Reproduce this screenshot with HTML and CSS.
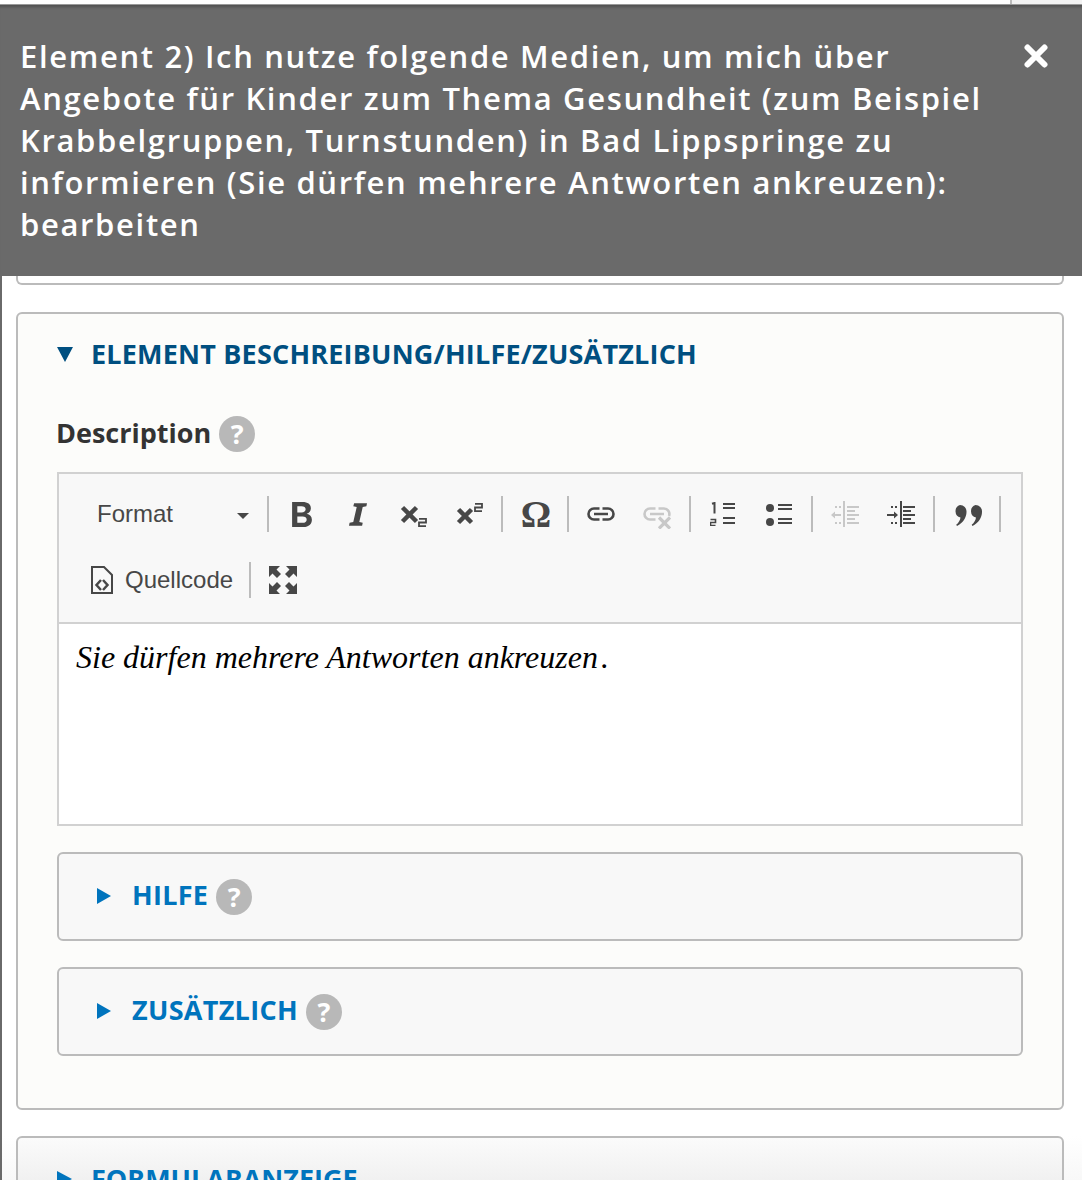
FILE: index.html
```html
<!DOCTYPE html>
<html lang="de">
<head>
    <meta charset="UTF-8">
    <meta name="viewport" content="width=device-width, initial-scale=1.0">
    <title>Element bearbeiten</title>
    <link rel="stylesheet" href="styles.css">
</head>
<body>

    <div class="top-strip"><span class="top-strip-end"></span></div>

    <!-- Dialog Titel -->
    <header class="dialog-title">
        <h1>Element 2) Ich nutze folgende Medien, um mich über Angebote für Kinder zum Thema Gesundheit (zum Beispiel Krabbelgruppen, Turnstunden) in Bad Lippspringe zu informieren (Sie dürfen mehrere Antworten ankreuzen): bearbeiten</h1>
        <svg class="dialog-close" viewBox="0 0 24 24"><path d="M3.500 3.500 L20.500 20.500 M20.500 3.500 L3.500 20.500" stroke="#fff" stroke-width="6" stroke-linecap="round" fill="none"/></svg>
    </header>

    <main class="dialog-body">
        <div class="panel panel-cut"></div>

        <section class="panel panel-open">
            <h2 class="panel-head">
                <span class="arrow-down"></span>
                ELEMENT BESCHREIBUNG/HILFE/ZUSÄTZLICH
            </h2>

            <div class="field-label">Description <span class="help">?</span></div>

            <div class="editor">
                <div class="toolbar">
                    <div class="tb-row">
                        <div class="tb-combo">Format<span class="combo-arrow"></span></div>
                        <span class="tb-sep"></span>
                        <span class="tb-btn tb-shift">
                            <svg viewBox="3 2 19 24" width="20" height="25"><path fill-rule="evenodd" fill="#474747" d="M3 2h10c5 0 8 2 8 6 0 3-1.500 4.500-4 5.300 3 .6 5 2.700 5 5.700 0 4-3 7-8 7H3zM8 6v6h4c2.500 0 4-1 4-3s-1.500-3-4-3zM8 16v6h5c2.500 0 4-1 4-3s-1.500-3-4-3z"/></svg>
                        </span>
                        <span class="tb-btn tb-shift">
                            <svg viewBox="2 1 21 26" width="18" height="25"><path fill="#474747" d="M8 1h15l-.7 3.500-4.300.8-4 17.400 4 .8-.7 3.500H2l.7-3.500 4.300-.8 4-17.400-4-.8z"/></svg>
                        </span>
                        <span class="tb-btn">
                            <svg viewBox="0 0 28 26" width="28" height="26"><path stroke="#474747" stroke-width="4.500" d="M3.500 6.500 L17.500 20.500 M17.500 6.500 L3.500 20.500"/><path stroke="#474747" stroke-width="1.800" fill="none" d="M20 17.900h7v3.600h-7v3.600h7"/></svg>
                        </span>
                        <span class="tb-btn">
                            <svg viewBox="0 0 28 26" width="28" height="26"><path stroke="#474747" stroke-width="4.500" d="M3.500 8.500 L16.500 21.500 M16.500 8.500 L3.500 21.500"/><path stroke="#474747" stroke-width="1.800" fill="none" d="M20 2.900h7v3.600h-7v3.600h7"/></svg>
                        </span>
                        <span class="tb-sep"></span>
                        <span class="tb-btn tb-omega tb-shift">Ω</span>
                        <span class="tb-sep"></span>
                        <span class="tb-btn">
                            <svg viewBox="0 0 28 14" width="28" height="14"><path fill="none" stroke="#474747" stroke-width="2.600" d="M12.500 1.500H7A5.500 5.500 0 0 0 7 12.500H12.500M15.500 1.500H21A5.500 5.500 0 0 1 21 12.500H15.500M7 7H21"/></svg>
                        </span>
                        <span class="tb-btn">
                            <svg viewBox="0 0 28 22" width="28" height="22" class="tb-unlink"><path fill="none" stroke="#c8c8c8" stroke-width="2.600" d="M12.500 1.500H7A5.500 5.500 0 0 0 7 12.500H12.500M15.500 1.500H21A5.500 5.500 0 0 1 26 9M7 7H21"/><path stroke="#c8c8c8" stroke-width="3.200" d="M16 10.500 L27 21.500 M27 10.500 L16 21.500"/></svg>
                        </span>
                        <span class="tb-sep"></span>
                        <span class="tb-btn">
                            <svg viewBox="0 0 26 24" width="26" height="24"><path stroke="#474747" stroke-width="2" fill="none" d="M2 1.800 L4.500 1 V11.500"/><path stroke="#474747" stroke-width="1.600" fill="none" d="M.5 17.500h5v3h-5v3h5"/><path stroke="#474747" stroke-width="2" d="M13 2h12M13 6h12M13 16h12M13 21h12"/></svg>
                        </span>
                        <span class="tb-btn">
                            <svg viewBox="0 0 26 24" width="26" height="24"><circle cx="4" cy="6" r="4" fill="#474747"/><circle cx="4" cy="20" r="4" fill="#474747"/><path stroke="#474747" stroke-width="2" d="M12 3h14M12 7h14M12 17h14M12 21h14"/></svg>
                        </span>
                        <span class="tb-sep"></span>
                        <span class="tb-btn">
                            <svg viewBox="0 0 28 26" width="28" height="26"><g fill="#c8c8c8"><path d="M12 0h2v26h-2z"/><path d="M4 5h2v2H4zM8 5h2v2H8zM4 21h2v2H4zM8 21h2v2H8z"/><path d="M4 13h6v2H4zM0 14l4-3.500v7z"/><path d="M16 5h12v2H16zM16 9h8v2h-8zM16 13h12v2H16zM16 17h8v2h-8zM16 21h12v2H16z"/></g></svg>
                        </span>
                        <span class="tb-btn">
                            <svg viewBox="0 0 28 26" width="28" height="26"><g fill="#474747"><path d="M13 0h2v26h-2z"/><path d="M4 5h2v2H4zM8 5h2v2H8zM4 21h2v2H4zM8 21h2v2H8z"/><path d="M0 13h7v2H0zM11 14l-4-3.500v7z"/><path d="M16 5h12v2H16zM16 9h8v2h-8zM16 13h12v2H16zM16 17h8v2h-8zM16 21h12v2H16z"/></g></svg>
                        </span>
                        <span class="tb-sep"></span>
                        <span class="tb-btn">
                            <svg viewBox="0 0 29 21" width="29" height="21" class="tb-quote"><path fill="#474747" d="M7 0a6.500 6.500 0 0 1 6.500 7c0 5.500-3.500 11-9.500 14l-.8-1.200c2.500-2 4-4.800 4.300-7.300A6.500 6.500 0 0 1 7 0z"/><path fill="#474747" transform="translate(15.500 0)" d="M7 0a6.500 6.500 0 0 1 6.500 7c0 5.500-3.500 11-9.500 14l-.8-1.200c2.500-2 4-4.800 4.300-7.300A6.500 6.500 0 0 1 7 0z"/></svg>
                        </span>
                        <span class="tb-sep"></span>
                    </div>
                    <div class="tb-row">
                        <div class="tb-source">
                            <svg viewBox="0 0 22 28" width="22" height="28"><path fill="none" stroke="#474747" stroke-width="2" d="M1 1h12l8 8v18H1z"/><path fill="none" stroke="#474747" stroke-width="2.500" d="M10 14 L5.500 19 L10 24 M12 14 L16.500 19 L12 24"/></svg>
                            Quellcode
                        </div>
                        <span class="tb-sep"></span>
                        <span class="tb-btn">
                            <svg viewBox="0 0 28 28" width="28" height="28"><path fill="#474747" d="M0 0H11L7.500 3.500 12 8 8 12 3.500 7.500 0 11zM28 0H17L20.500 3.500 16 8 20 12 24.500 7.500 28 11zM0 28H11L7.500 24.500 12 20 8 16 3.500 20.500 0 17zM28 28H17L20.500 24.500 16 20 20 16 24.500 20.500 28 17z"/></svg>
                        </span>
                    </div>
                </div>
                <div class="editor-text"><em>Sie dürfen mehrere Antworten ankreuzen<span class="end-dot">.</span></em></div>
            </div>

            <div class="sub-panel">
                <span class="arrow-right"></span>
                <span class="sub-title">HILFE</span>
                <span class="help">?</span>
            </div>
            <div class="sub-panel">
                <span class="arrow-right"></span>
                <span class="sub-title">ZUSÄTZLICH</span>
                <span class="help">?</span>
            </div>
        </section>

        <section class="panel panel-closed">
            <h2 class="panel-head panel-head-closed">
                <span class="arrow-right arrow-big"></span>
                FORMULARANZEIGE
            </h2>
        </section>
    </main>

</body>
</html>
```

FILE: styles.css
```css
/* Basis Styling */
body {
    margin: 0;
    height: 1180px;
    overflow: hidden;
    background: #fff;
    font-family: "Open Sans", sans-serif;
    color: #333;
}

.top-strip {
    height: 4px;
    background: #fff;
    display: flex;
    justify-content: flex-end;
}

.top-strip-end {
    width: 70px;
    background: #f2f2f2;
    border-left: 2px solid #bbb;
}

/* Dialog Titel */
.dialog-title {
    height: 272px;
    box-sizing: border-box;
    padding: 30px 34px 0 20px;
    background: #6a6a6a;
    border-top: 1px solid #999;
    box-shadow: inset 0 4px 3px -2px rgba(0, 0, 0, 0.25);
    display: flex;
    justify-content: space-between;
    align-items: flex-start;
    position: relative;
    z-index: 2;
}

.dialog-title h1 {
    margin: 0;
    width: 990px;
    flex: none;
    font-size: 31px;
    line-height: 42px;
    font-weight: 600;
    letter-spacing: 1.65px;
    color: #fff;
}

.dialog-close {
    width: 24px;
    height: 24px;
    flex: none;
    margin-top: 9px;
}

.dialog-body {
    border-left: 2px solid #6a6a6a;
    padding: 0 18px 0 14px;
    height: 904px;
    box-sizing: border-box;
    background: linear-gradient(#fff 860px, #f8f8f8 904px);
}

/* Panels */
.panel {
    border: 2px solid #bbb;
    border-radius: 6px;
    box-sizing: border-box;
    background: #fcfcfa;
}

.panel-cut {
    height: 9px;
    border-top: 0;
    border-top-left-radius: 0;
    border-top-right-radius: 0;
    background: #fff;
    margin-bottom: 27px;
}

.panel-open {
    height: 798px;
    padding: 0 39px;
    margin-bottom: 26px;
}

.panel-closed {
    height: 120px;
    padding: 0 39px;
    background: linear-gradient(#fbfbfb, #f0f0f0 44px);
}

.panel-head {
    margin: 0;
    padding-top: 21px;
    font-size: 27px;
    line-height: 38px;
    font-weight: 700;
    letter-spacing: 0.2px;
    color: #004f80;
    display: flex;
    align-items: center;
}

.panel-head-closed {
    padding-top: 22px;
    letter-spacing: 0;
    color: #0074bd;
}

.arrow-down {
    width: 0;
    height: 0;
    border-left: 8px solid transparent;
    border-right: 8px solid transparent;
    border-top: 15px solid #004f80;
    margin-right: 18px;
}

.arrow-right {
    width: 0;
    height: 0;
    border-top: 8px solid transparent;
    border-bottom: 8px solid transparent;
    border-left: 14px solid #0074bd;
    margin: 0 21px 2px 1px;
}

.arrow-big {
    border-left-width: 15px;
    margin: 0 19px 0 0;
}

.field-label {
    margin-top: 40px;
    margin-left: -1px;
    height: 40px;
    box-sizing: border-box;
    padding-bottom: 2px;
    font-size: 27px;
    font-weight: 700;
    color: #333;
    display: flex;
    align-items: center;
    gap: 8px;
}

.field-label .help {
    margin-top: 4px;
}

.help {
    width: 36px;
    height: 36px;
    border-radius: 50%;
    background: #b8b8b8;
    color: #fff;
    font-size: 27px;
    font-weight: 700;
    line-height: 36px;
    text-align: center;
    flex: none;
}

/* Editor */
.editor {
    margin-top: 19px;
    border: 2px solid #d1d1d1;
    height: 354px;
    box-sizing: border-box;
    background: #fff;
}

.toolbar {
    background: #f8f8f8;
    height: 150px;
    box-sizing: border-box;
    border-bottom: 2px solid #d1d1d1;
    padding: 7px 0 0 18px;
}

.tb-row {
    display: flex;
    align-items: center;
    height: 66px;
}

.tb-combo {
    width: 186px;
    box-sizing: border-box;
    padding-left: 20px;
    font-family: "Liberation Sans", Arial, sans-serif;
    font-size: 24px;
    color: #474747;
    position: relative;
}

.combo-arrow {
    position: absolute;
    right: 14px;
    top: 13px;
    width: 0;
    height: 0;
    border-left: 6px solid transparent;
    border-right: 6px solid transparent;
    border-top: 6px solid #474747;
}

.tb-sep {
    width: 2px;
    height: 36px;
    margin: 0 4px;
    background: #bcbcbc;
    flex: none;
}

.tb-btn {
    width: 56px;
    box-sizing: border-box;
    display: flex;
    justify-content: center;
    align-items: center;
    flex: none;
}

.tb-shift {
    padding-left: 2px;
}

.tb-unlink {
    margin-top: 8px;
}

.tb-quote {
    margin-top: 2px;
}

.tb-omega {
    font-family: "Liberation Serif", serif;
    font-size: 38px;
    font-weight: 700;
    line-height: 36px;
    color: #474747;
}

.tb-source {
    width: 168px;
    box-sizing: border-box;
    padding-left: 14px;
    display: flex;
    align-items: center;
    gap: 12px;
    font-family: "Liberation Sans", Arial, sans-serif;
    font-size: 24px;
    color: #474747;
}

.editor-text {
    padding: 13px 17px;
    font-family: "Liberation Serif", serif;
    font-size: 32px;
    line-height: 40px;
    color: #000;
}

.end-dot {
    margin-left: 3px;
}

/* Unterpanels */
.sub-panel {
    height: 89px;
    margin-top: 26px;
    box-sizing: border-box;
    padding-left: 37px;
    border: 2px solid #bbb;
    border-radius: 6px;
    background: #f8f8f8;
    display: flex;
    align-items: center;
}

.sub-title {
    font-size: 27px;
    font-weight: 700;
    letter-spacing: 0.3px;
    color: #0074bd;
    margin: 0 8px 4px 0;
}
```
